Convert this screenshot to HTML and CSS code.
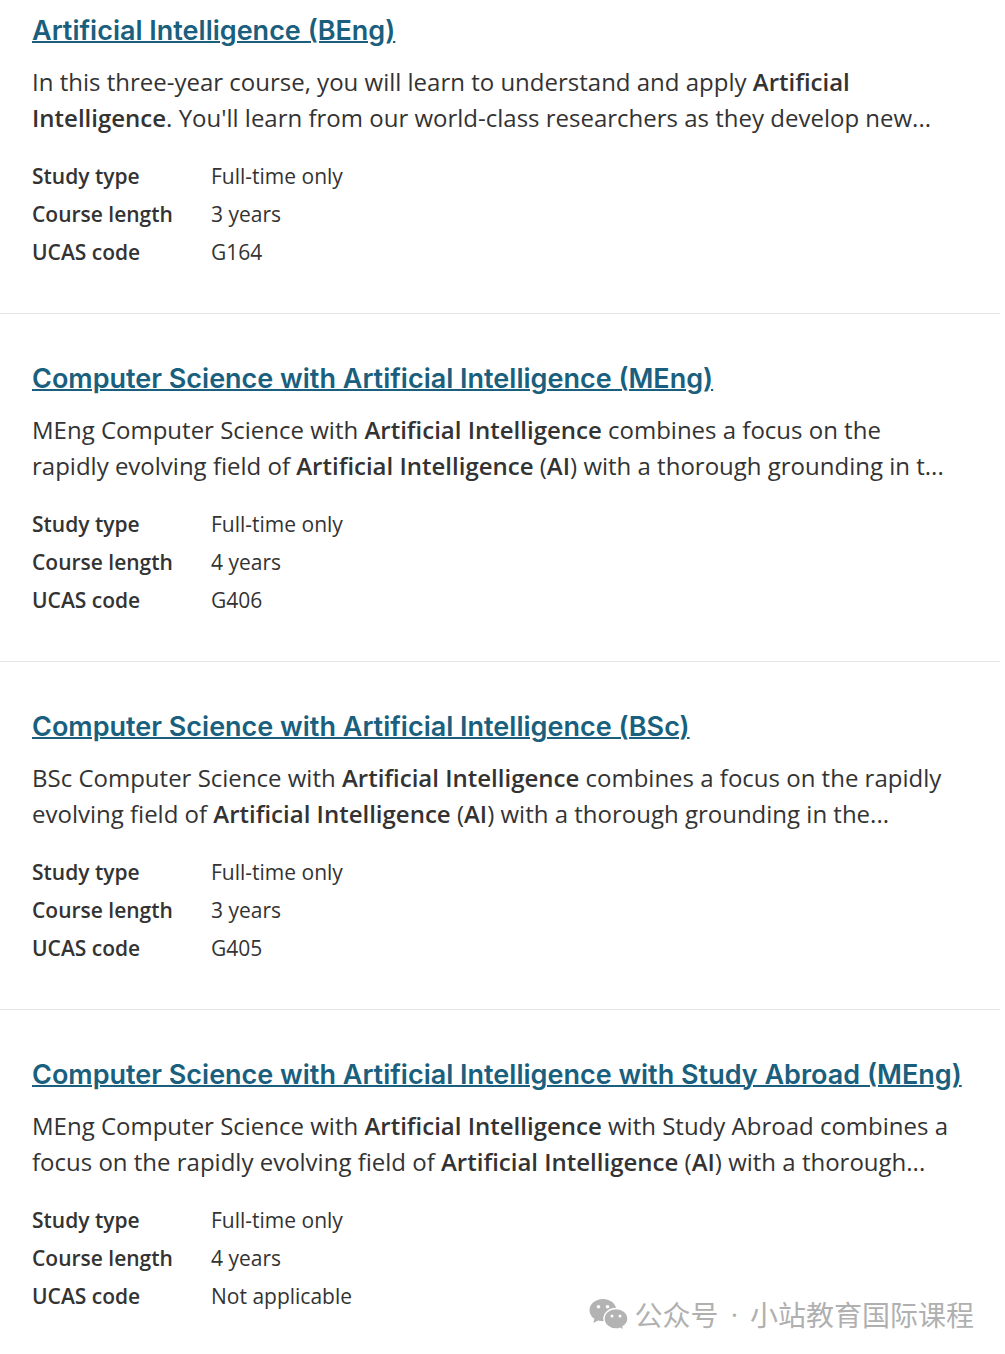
FILE: index.html
```
<!DOCTYPE html>
<html lang="en">
<head>
    <meta charset="UTF-8">
    <meta name="viewport" content="width=device-width, initial-scale=1.0">
    <title>Course search results</title>
    <link rel="stylesheet" href="styles.css">
</head>
<body>

<main class="results">
    <article class="course">
        <h2><a href="#">Artificial Intelligence (BEng)</a></h2>
        <p class="summary">In this three-year course, you will learn to understand and apply <strong>Artificial Intelligence</strong>. You'll learn from our world-class researchers as they develop new...</p>
        <dl class="details">
            <dt>Study type</dt><dd>Full-time only</dd>
            <dt>Course length</dt><dd>3 years</dd>
            <dt>UCAS code</dt><dd>G164</dd>
        </dl>
    </article>

    <article class="course">
        <h2><a href="#">Computer Science with Artificial Intelligence (MEng)</a></h2>
        <p class="summary">MEng Computer Science with <strong>Artificial Intelligence</strong> combines a focus on the rapidly evolving field of <strong>Artificial Intelligence</strong> (<strong>AI</strong>) with a thorough grounding in t...</p>
        <dl class="details">
            <dt>Study type</dt><dd>Full-time only</dd>
            <dt>Course length</dt><dd>4 years</dd>
            <dt>UCAS code</dt><dd>G406</dd>
        </dl>
    </article>

    <article class="course">
        <h2><a href="#">Computer Science with Artificial Intelligence (BSc)</a></h2>
        <p class="summary">BSc Computer Science with <strong>Artificial Intelligence</strong> combines a focus on the rapidly evolving field of <strong>Artificial Intelligence</strong> (<strong>AI</strong>) with a thorough grounding in the...</p>
        <dl class="details">
            <dt>Study type</dt><dd>Full-time only</dd>
            <dt>Course length</dt><dd>3 years</dd>
            <dt>UCAS code</dt><dd>G405</dd>
        </dl>
    </article>

    <article class="course">
        <h2><a href="#">Computer Science with Artificial Intelligence with Study Abroad (MEng)</a></h2>
        <p class="summary">MEng Computer Science with <strong>Artificial Intelligence</strong> with Study Abroad combines a focus on the rapidly evolving field of <strong>Artificial Intelligence</strong> (<strong>AI</strong>) with a thorough...</p>
        <dl class="details">
            <dt>Study type</dt><dd>Full-time only</dd>
            <dt>Course length</dt><dd>4 years</dd>
            <dt>UCAS code</dt><dd>Not applicable</dd>
        </dl>
    </article>
</main>

<!-- Account badge -->
<div class="watermark" lang="zh-CN">
    <svg class="wechat" viewBox="0 0 40 32" aria-hidden="true">
        <path fill="#b3b3b3" d="M14 1C6.500 1 .5 6 .5 12.200c0 3.500 1.900 6.600 4.900 8.600L4.300 25l4.900-2.400c1.500.5 3.100.7 4.800.7 7.500 0 13.500-5 13.500-11.100S21.500 1 14 1z"/>
        <path fill="#b3b3b3" stroke="#fff" stroke-width="1.500" d="M27 10.500c-6.700 0-12 4.500-12 10.200S20.300 31 27 31c1.400 0 2.700-.2 4-.6l4 2-.9-3.700c3-1.900 4.900-4.700 4.900-8 0-5.700-5.300-10.200-12-10.200z"/>
        <g fill="#fff">
            <circle cx="9.500" cy="8.800" r="1.800"/>
            <circle cx="18.500" cy="8.800" r="1.800"/>
            <circle cx="23" cy="18" r="1.500"/>
            <circle cx="31" cy="18" r="1.500"/>
        </g>
    </svg>
    <span>公众号</span>
    <span class="dot">·</span>
    <span>小站教育国际课程</span>
</div>

</body>
</html>
```

FILE: styles.css
```
body {
    position: relative;
    margin: 0;
    background: #ffffff;
    color: #333333;
    font-family: 'Open Sans', sans-serif;
}

.results {
    margin-right: 5px;
}

.course {
    padding: 47px 32px 42px;
    border-bottom: 1px solid #e5e5e5;
}
.course:first-child {
    padding-top: 13px;
}
.course:last-child {
    padding-bottom: 39px;
    border-bottom: none;
}

.course h2 {
    margin: 0 0 15px;
    font-family: 'Inter', sans-serif;
    font-size: 27px;
    font-weight: 600;
    line-height: 36px;
}
.course h2 a {
    color: #1a5f7d;
    text-decoration: underline;
    text-decoration-thickness: 2px;
}

.summary {
    margin: 0 0 21px;
    padding-right: 16px;
    font-size: 24px;
    line-height: 36px;
}
.summary strong {
    font-weight: 600;
}

.details {
    display: grid;
    grid-template-columns: 179px 1fr;
    margin: 0;
    font-size: 21px;
    line-height: 38px;
}
.details dt {
    font-weight: 600;
}
.details dd {
    margin: 0;
}

/* Sits over the bottom right corner of the list */
.watermark {
    position: absolute;
    right: 31px;
    bottom: 20px;
    display: flex;
    align-items: center;
    color: #b0b0b0;
    font-family: 'Noto Sans CJK SC', sans-serif;
    font-size: 28px;
    line-height: 40px;
}
.watermark .dot {
    margin: 0 12px;
    font-family: 'Open Sans', sans-serif;
}
.wechat {
    width: 40px;
    height: 32px;
    margin-right: 6px;
}
```
